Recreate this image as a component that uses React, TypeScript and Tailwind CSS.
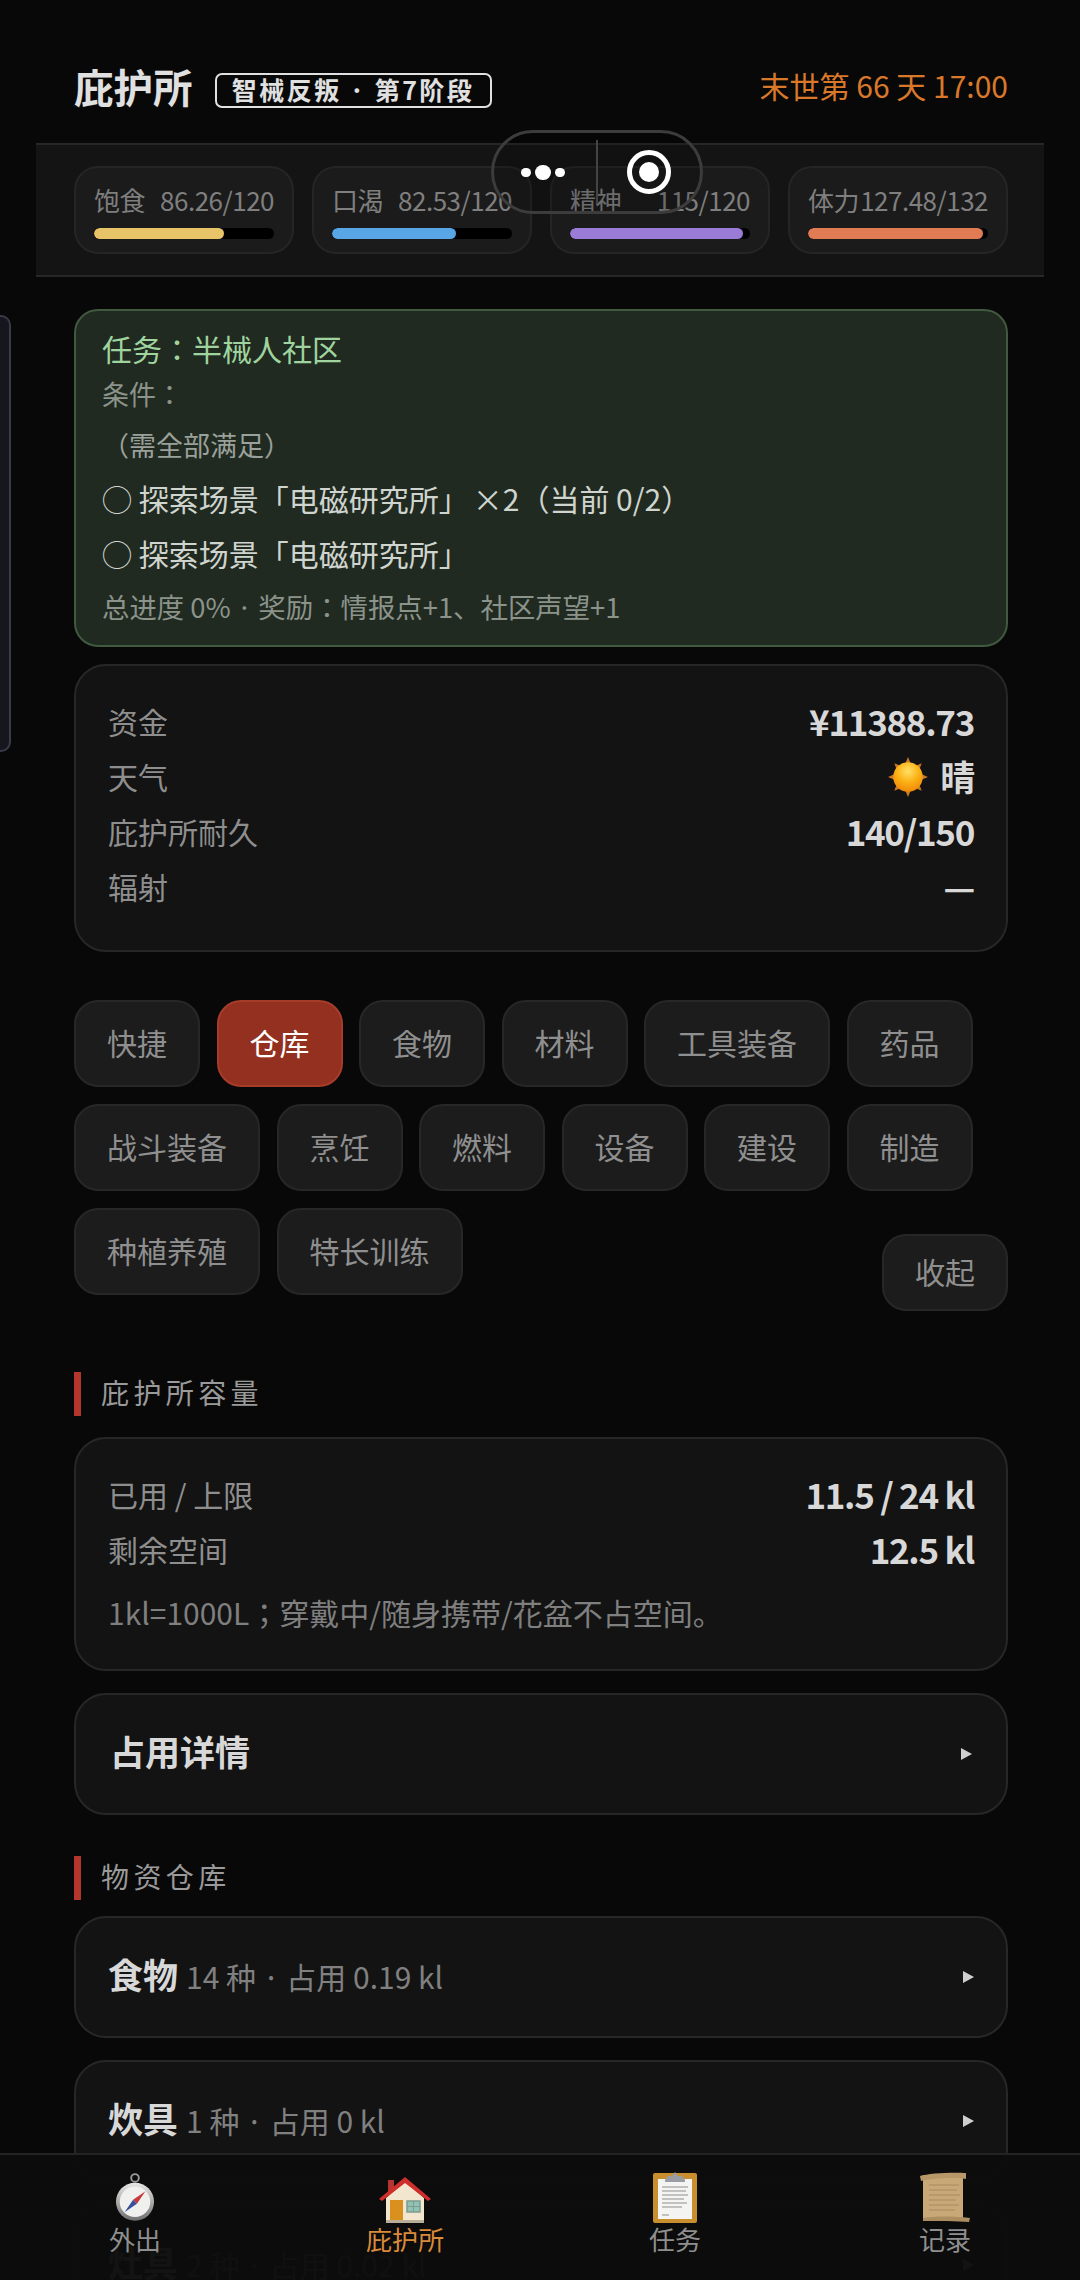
const cjk = { fontFamily: '"Noto Sans CJK JP", "Noto Sans", sans-serif' };

const stats = [
  { label: '饱食', value: '86.26/120', color: 'bg-[#e8c468]', width: 'w-[72%]' },
  { label: '口渴', value: '82.53/120', color: 'bg-[#58a6e6]', width: 'w-[69%]' },
  { label: '精神', value: '115/120', color: 'bg-[#9a7bd6]', width: 'w-[96%]' },
  { label: '体力', value: '127.48/132', color: 'bg-[#e07b54]', width: 'w-[97%]' },
];

const tabs = [
  ['快捷', '仓库', '食物', '材料', '工具装备', '药品'],
  ['战斗装备', '烹饪', '燃料', '设备', '建设', '制造'],
  ['种植养殖', '特长训练'],
];

const SunIcon = () => (
  <svg width="40" height="40" viewBox="0 0 38 38">
    <defs>
      <radialGradient id="sun" cx="50%" cy="30%" r="70%">
        <stop offset="0%" stopColor="#ffe066" />
        <stop offset="55%" stopColor="#fbb014" />
        <stop offset="100%" stopColor="#f08a08" />
      </radialGradient>
    </defs>
    <g fill="#c9782a">
      <path d="M19 0l2.5 6h-5zM19 38l2.5-6h-5zM0 19l6-2.5v5zM38 19l-6-2.5v5zM6 6l6.5 2.5-4 4zM32 6l-6.5 2.5 4 4zM6 32l6.5-2.5-4-4zM32 32l-6.5-2.5 4-4z" />
    </g>
    <circle cx="19" cy="19" r="14" fill="url(#sun)" />
  </svg>
);

const CompassIcon = () => (
  <svg width="40" height="52" viewBox="0 0 42 52">
    <defs>
      <linearGradient id="rim" x1="0" y1="0" x2="0" y2="1">
        <stop offset="0%" stopColor="#e8e8e8" />
        <stop offset="100%" stopColor="#6f6f6f" />
      </linearGradient>
    </defs>
    <circle cx="21" cy="6" r="4" fill="none" stroke="#9a9a9a" strokeWidth="2" />
    <circle cx="21" cy="31" r="20" fill="url(#rim)" />
    <circle cx="21" cy="31" r="16" fill="#f0f0ee" />
    <path d="M32 20L23 33l-4-4z" fill="#c8373c" />
    <path d="M10 42l9-13 4 4z" fill="#36509c" />
  </svg>
);

const HouseIcon = () => (
  <svg width="52" height="46" viewBox="0 0 52 46">
    <rect x="9" y="3" width="6" height="12" fill="#b5352f" />
    <path d="M7 21L26 4l19 17v24H7z" fill="#f2e6cf" />
    <path d="M0 22L26 0l26 22-3 2L26 6 3 24z" fill="#cf2f2c" />
    <rect x="11" y="23" width="13" height="22" fill="#d9901f" />
    <rect x="28" y="24" width="13" height="11" fill="#8fc4b4" stroke="#7f9a8e" strokeWidth="1.5" />
    <path d="M34.5 24v11M28 29.5h13" stroke="#7f9a8e" strokeWidth="1" />
    <rect x="7" y="43" width="38" height="3" fill="#b9ae98" />
  </svg>
);

const ClipboardIcon = () => (
  <svg width="44" height="52" viewBox="0 0 44 52">
    <rect x="0" y="2" width="44" height="50" rx="2" fill="#c98f2e" />
    <rect x="5" y="8" width="34" height="40" fill="#f4f4f2" />
    <path d="M12 8l3-4h4l3-4 3 4h4l3 4v2H12z" fill="#9a9ea3" transform="translate(0 1)" />
    <path d="M9 16h26M9 20h24M9 24h26M9 28h22M9 32h25M9 36h20M9 44h7" stroke="#8e8e8e" strokeWidth="1" />
  </svg>
);

const ScrollIcon = () => (
  <svg width="50" height="52" viewBox="0 0 50 52">
    <path d="M3 4h40v44H3z" fill="#c9a878" />
    <path d="M0 5c8-3 34-4 46-3v6C36 6 12 7 1 10z" fill="#b89868" />
    <path d="M3 47c12-2 30-2 47 0l-1 4c-12-1-32-1-46-1z" fill="#ad8e60" />
    <path d="M9 14h30M9 19h28M9 24h31M9 29h27M9 34h30M9 39h26" stroke="#a88a5e" strokeWidth="1" />
  </svg>
);

const navItems = [
  { label: '外出', icon: <CompassIcon />, active: false },
  { label: '庇护所', icon: <HouseIcon />, active: true },
  { label: '任务', icon: <ClipboardIcon />, active: false },
  { label: '记录', icon: <ScrollIcon />, active: false },
];

const SectionTitle = ({ text }: { text: string }) => (
  <div className="flex items-center h-[44px] border-l-[7px] border-[#b3362c] pl-[20px] pb-[4px] text-[28px] tracking-[4.4px] text-[#9a9a9a]">
    {text}
  </div>
);

const Row = ({ label, value }: { label: string; value: React.ReactNode }) => (
  <div className="flex items-center justify-between h-[55px]">
    <span className="text-[30px] text-[#8e8e8e]">{label}</span>
    <span className="text-[35px] font-bold text-[#d8d8d8] tracking-[-1.3px] flex items-center gap-[12px]">{value}</span>
  </div>
);

const Tab = ({ text, active }: { text: string; active?: boolean }) => (
  <div
    className={`h-[87px] px-[31px] pb-[2px] flex items-center rounded-[24px] border-2 text-[30px] ${
      active ? 'bg-[#93301f] border-[#a83c2a] text-white' : 'bg-[#1c1c1c] border-[#272727] text-[#8f8f8f]'
    }`}
  >
    {text}
  </div>
);

const Collapsed = ({ title, sub }: { title: string; sub: string }) => (
  <div className="h-[122px] shrink-0 flex items-center justify-between rounded-[32px] border-2 border-[#272727] bg-[#131313] px-[32px]">
    <div className="flex items-baseline gap-[8px] pb-[6px]">
      <span className="text-[35px] font-bold text-[#d8d8d8]">{title}</span>
      <span className="text-[30px] text-[#808080]">{sub}</span>
    </div>
    <span className="w-0 h-0 border-y-[6px] border-y-transparent border-l-[11px] border-l-[#cfcfcf]" />
  </div>
);

const App = () => {
  return (
    <div className="relative w-[1080px] h-[2280px] overflow-hidden bg-[#080808]" style={cjk}>
      {/* Header */}
      <div className="mx-[36px]">
        <div className="h-[143px] pl-[38px] pr-[36px] pt-[28px] flex items-center justify-between">
          <div className="flex items-center gap-[22px]">
            <span className="text-[39.5px] font-bold text-[#e0e0e0]">庇护所</span>
            <span className="mt-[9px] h-[35px] w-[277px] flex items-center justify-center rounded-[7px] border-2 border-[#e0e0e0] text-[25px] font-bold tracking-[2.4px] text-[#e0e0e0]">
              智械反叛 · 第7阶段
            </span>
          </div>
          <span className="text-[30px] text-[#d9782b]">末世第 66 天 17:00</span>
        </div>

        {/* Stats strip */}
        <div className="h-[134px] pl-[38px] pr-[36px] flex items-center gap-[18px] bg-[#141414] border-y-2 border-[#272727]">
          {stats.map((s) => (
            <div key={s.label} className="flex-1 h-[88px] rounded-[24px] border-2 border-[#252525] bg-[#1b1b1b] px-[18px] pt-[14px]">
              <div className="flex justify-between text-[26px] leading-[36px] tracking-[-0.5px] text-[#7f7f7f] whitespace-nowrap">
                <span>{s.label}</span>
                <span>{s.value}</span>
              </div>
              <div className="mt-[10px] h-[11px] rounded-full bg-black overflow-hidden">
                <div className={`h-full rounded-full ${s.color} ${s.width}`} />
              </div>
            </div>
          ))}
        </div>
      </div>

      {/* Main content */}
      <div className="pl-[74px] pr-[72px] pt-[32px] flex flex-col">
        <div className="h-[338px] rounded-[24px] border-2 border-[#40593f] bg-[#202a20] pl-[26px] pr-[27px] pt-[14px]">
          <div className="text-[30px] leading-[46px] text-[#9fd49f]">任务：半械人社区</div>
          <div className="text-[27px] leading-[42px] mt-[2px] text-[#8b938b]">条件：</div>
          <div className="text-[27px] leading-[42px] mt-[9px] text-[#9aa09a]">（需全部满足）</div>
          <div className="text-[30px] leading-[48px] mt-[8px] text-[#cfd4cf]">
            ◯ 探索场景「电磁研究所」<span className="ml-[4px]">×2（当前 0/2）</span>
          </div>
          <div className="text-[30px] leading-[48px] mt-[7px] text-[#cfd4cf]">◯ 探索场景「电磁研究所」</div>
          <div className="text-[27.4px] leading-[42px] mt-[8px] text-[#8b938b]">总进度 0% · 奖励：情报点+1、社区声望+1</div>
        </div>

        <div className="mt-[17px] h-[288px] rounded-[32px] border-2 border-[#272727] bg-[#131313] px-[32px] pt-[28px]">
          <Row label="资金" value="¥11388.73" />
          <Row label="天气" value={<><SunIcon /> 晴</>} />
          <Row label="庇护所耐久" value="140/150" />
          <Row label="辐射" value="—" />
        </div>

        {/* Tabs */}
        <div className="relative mt-[48px] flex flex-col gap-[17px]">
          {tabs.map((row, i) => (
            <div key={i} className="flex gap-[16.5px]">
              {row.map((t) => (
                <Tab key={t} text={t} active={t === '仓库'} />
              ))}
            </div>
          ))}
          <div className="absolute right-0 bottom-[-16px] h-[77px] px-[31px] pb-[2px] flex items-center rounded-[24px] border-2 border-[#272727] bg-[#1c1c1c] text-[30px] text-[#8f8f8f]">
            收起
          </div>
        </div>

        <div className="mt-[77px]">
          <SectionTitle text="庇护所容量" />
        </div>

        <div className="mt-[21px] h-[234px] rounded-[32px] border-2 border-[#272727] bg-[#131313] px-[32px] pt-[28px]">
          <Row label="已用 / 上限" value="11.5 / 24 kl" />
          <Row label="剩余空间" value="12.5 kl" />
          <div className="mt-[10px] text-[30px] leading-[50px] text-[#7f7f7f]">1kl=1000L；穿戴中/随身携带/花盆不占空间。</div>
        </div>

        <div className="mt-[22px]">
          <div className="h-[122px] flex items-center justify-between rounded-[32px] border-2 border-[#272727] bg-[#131313] px-[34px]">
            <span className="text-[35px] font-bold text-[#d8d8d8] pb-[6px]">占用详情</span>
            <span className="w-0 h-0 border-y-[6px] border-y-transparent border-l-[11px] border-l-[#cfcfcf]" />
          </div>
        </div>

        <div className="mt-[41px]">
          <SectionTitle text="物资仓库" />
        </div>

        <div className="mt-[16px] flex flex-col gap-[22px]">
          <Collapsed title="食物" sub="14 种 · 占用 0.19 kl" />
          <Collapsed title="炊具" sub="1 种 · 占用 0 kl" />
          <Collapsed title="灶具" sub="2 种 · 占用 0.02 kl" />
        </div>
      </div>

      {/* Left drawer handle */}
      <div className="absolute left-0 top-[315px] w-[11px] h-[437px] rounded-r-[10px] border-2 border-l-0 border-[#3a3a4a] bg-[#16161f]" />

      {/* Mini program capsule */}
      <div className="absolute left-[491px] top-[130px] w-[212px] h-[84px] rounded-[42px] border-[3px] border-[#3c3c3c] bg-black/15 flex items-center">
        <div className="w-[102px] flex items-center justify-center gap-[4px] pr-[5px]">
          <span className="w-[10px] h-[9px] rounded-full bg-white" />
          <span className="w-[16px] h-[15px] rounded-full bg-white" />
          <span className="w-[10px] h-[9px] rounded-full bg-white" />
        </div>
        <div className="w-[2px] h-[64px] bg-[#444444]" />
        <div className="flex-1 flex items-center justify-center">
          <div className="w-[44px] h-[44px] rounded-full border-[5px] border-white flex items-center justify-center">
            <span className="w-[20px] h-[20px] rounded-full bg-white" />
          </div>
        </div>
      </div>

      {/* Bottom nav */}
      <div className="absolute left-0 right-0 bottom-0 h-[127px] border-t-2 border-[#242424] bg-[#0c0c0c]/[0.97] grid grid-cols-4 pt-[16px]">
        {navItems.map((item) => (
          <div key={item.label} className="flex flex-col items-center">
            <div className="h-[52px] flex items-end">{item.icon}</div>
            <span className={`text-[26px] leading-[32px] ${item.active ? 'text-[#d98a3a]' : 'text-[#8f8f8f]'}`}>{item.label}</span>
          </div>
        ))}
      </div>
    </div>
  );
};

export default App;
